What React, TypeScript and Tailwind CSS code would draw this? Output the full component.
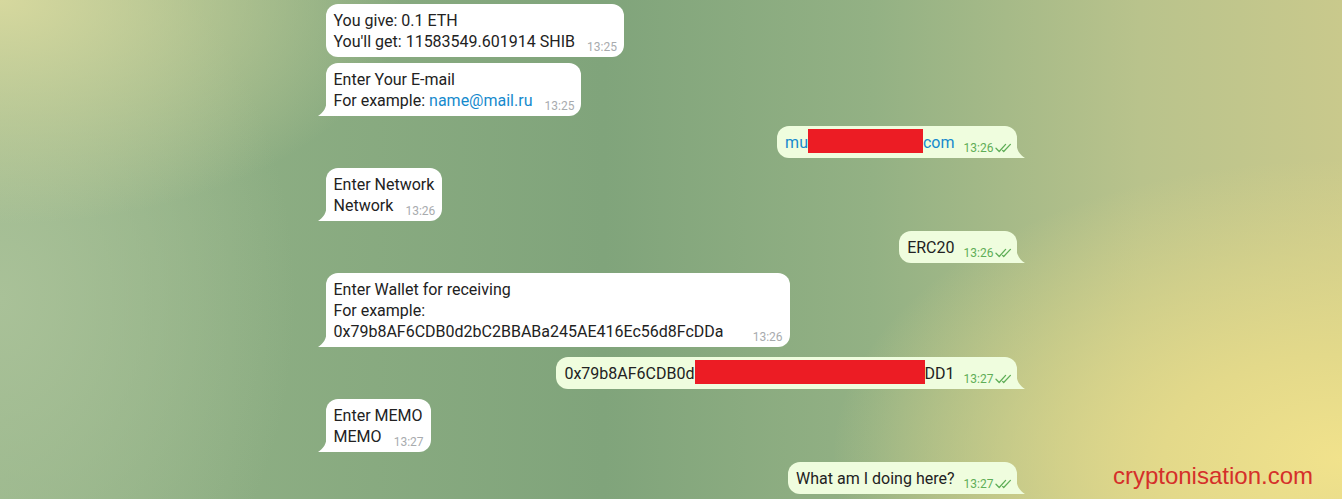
import React from 'react';

type Msg = {
  out?: boolean;
  time: string;
  tail?: boolean;
  gap: string;
  spacer?: string;
  body: React.ReactNode;
};

const Checks = () => (
  <svg width="17" height="10" viewBox="0 0 17 10" className="ml-[1px]">
    <path d="M1 5.2l3.2 3.3L10.6 1.4M7.6 7.4l1.1 1.1L15.4 1.4" fill="none" stroke="#5fae57" strokeWidth="1.3" strokeLinecap="round" strokeLinejoin="round" />
  </svg>
);

// red box painted over the address in the screenshot
const Redact = ({ w }: { w: string }) => (
  <span className={`inline-block align-top h-[24px] -mt-[3px] -mb-[3px] bg-[#ec1c24] ${w}`} />
);

const messages: Msg[] = [
  {
    time: '13:25',
    gap: 'mt-[4px]',
    body: (
      <>
        You give: 0.1 ETH
        <br />
        You'll get: 11583549.601914 SHIB
      </>
    ),
  },
  {
    time: '13:25',
    tail: true,
    gap: 'mt-[6px]',
    body: (
      <>
        Enter Your E-mail
        <br />
        For example: <span className="text-[#168acd]">name@mail.ru</span>
      </>
    ),
  },
  {
    out: true,
    time: '13:26',
    tail: true,
    gap: 'mt-[10px]',
    body: (
      <span className="text-[#168acd]">
        mu<Redact w="w-[115px]" />com
      </span>
    ),
  },
  {
    time: '13:26',
    tail: true,
    gap: 'mt-[10px]',
    body: (
      <>
        Enter Network
        <br />
        Network
      </>
    ),
  },
  { out: true, time: '13:26', tail: true, gap: 'mt-[10px]', body: 'ERC20' },
  {
    time: '13:26',
    tail: true,
    gap: 'mt-[10px]',
    spacer: 'w-[59px]',
    body: (
      <>
        Enter Wallet for receiving
        <br />
        For example:
        <br />
        0x79b8AF6CDB0d2bC2BBABa245AE416Ec56d8FcDDa
      </>
    ),
  },
  {
    out: true,
    time: '13:27',
    tail: true,
    gap: 'mt-[10px]',
    body: (
      <>
        0x79b8AF6CDB0d<Redact w="w-[230px]" />DD1
      </>
    ),
  },
  {
    time: '13:27',
    tail: true,
    gap: 'mt-[10px]',
    body: (
      <>
        Enter MEMO
        <br />
        MEMO
      </>
    ),
  },
  { out: true, time: '13:27', tail: true, gap: 'mt-[10px]', body: 'What am I doing here?' },
];

function Bubble({ m }: { m: Msg }) {
  const out = !!m.out;
  return (
    <div className={`flex ${out ? 'justify-end' : 'justify-start'} ${m.gap}`}>
      <div
        className={`relative rounded-[12px] pt-[6px] pb-[5px] pl-[8px] leading-[21px] text-[16px] text-[#222222] ${
          out ? 'bg-[#effdde] pr-[5px]' : 'bg-white pr-[7px]'
        } ${m.tail ? (out ? 'rounded-br-none' : 'rounded-bl-none') : ''}`}
      >
        {m.body}
        <span className={`inline-block ${m.spacer ?? (out ? 'w-[57px]' : 'w-[42px]')}`} />
        <span
          className={`absolute bottom-[3px] flex items-center text-[12px] leading-[14px] ${
            out ? 'right-[5px] text-[#5fae57]' : 'right-[7px] text-[#a8abae]'
          }`}
        >
          {m.time}
          {out && <Checks />}
        </span>
        {m.tail &&
          (out ? (
            <svg width="9" height="18" viewBox="0 0 9 18" className="absolute bottom-0 right-[-8px]">
              <path d="M0 0C0 10 4 15 9 18H0Z" fill="#effdde" />
            </svg>
          ) : (
            <svg width="9" height="18" viewBox="0 0 9 18" className="absolute bottom-0 left-[-8px]">
              <path d="M9 0C9 10 5 15 0 18H9Z" fill="#ffffff" />
            </svg>
          ))}
      </div>
    </div>
  );
}

export default function App() {
  return (
    <div
      className="relative h-[499px] w-full overflow-hidden font-['Roboto',sans-serif] bg-[radial-gradient(ellipse_38%_60%_at_100%_92%,#f1e28c_0%,#e3d98a_35%,rgba(205,206,140,0)_100%),radial-gradient(ellipse_30%_45%_at_0%_0%,#d6d89e_0%,rgba(200,210,160,0)_100%),radial-gradient(ellipse_22%_80%_at_0%_60%,#a9c198_0%,rgba(169,193,152,0)_100%),linear-gradient(90deg,#95b488_0%,#80a47b_45%,#93b184_65%,#b9c38c_85%,#c9c98c_100%)]"
    >
      <div className="mx-auto w-[691px]">
        {messages.map((m, i) => (
          <Bubble key={i} m={m} />
        ))}
      </div>
      <div className="absolute right-[29px] bottom-[9px] font-['Liberation_Sans',Arial,sans-serif] text-[24px] leading-[28px] text-[#d5302a]">
        cryptonisation.com
      </div>
    </div>
  );
}
